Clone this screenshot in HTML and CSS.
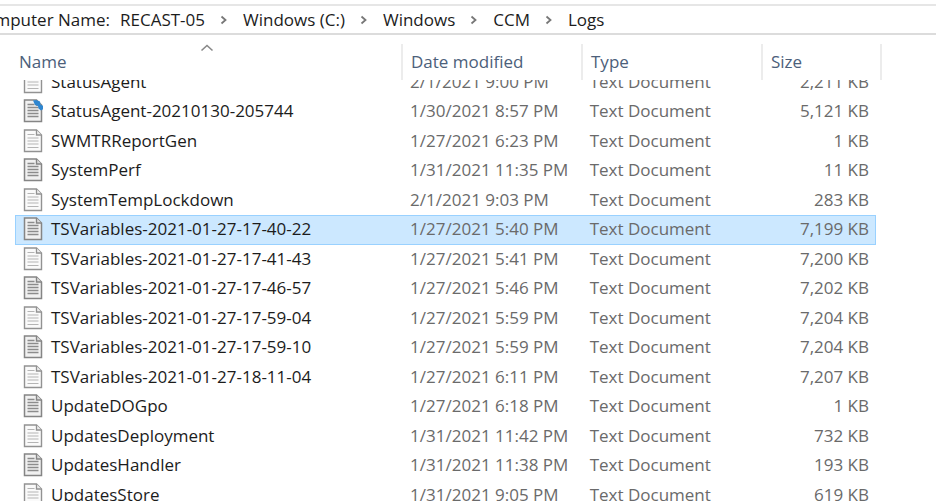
FILE: index.html
```html
<!DOCTYPE html>
<html lang="en">
<head>
<meta charset="utf-8">
<title>Logs</title>
<link rel="stylesheet" href="styles.css">
</head>
<body>
<svg class="sprite" aria-hidden="true">
  <symbol id="chevron" viewBox="0 0 8 10"><path d="M1.5 1.5 5.5 5 1.5 8.5" fill="none" stroke="#777" stroke-width="1.8"/></symbol>
  <symbol id="doc-light" viewBox="0 0 20 24">
    <path d="M1.5 1h12l5 5v16.500h-17z" fill="#fafafa" stroke="#929292" stroke-width="1.4"/>
    <path d="M13.500 1v5h5" fill="#eee" stroke="#929292" stroke-width="1.3"/>
    <path d="M4.500 5.500h7M4.500 9h11M4.500 12h11M4.500 15h11M4.500 18.500h11" stroke="#b4b4b4" stroke-width="1.2"/>
  </symbol>
  <symbol id="doc-dark" viewBox="0 0 20 24">
    <path d="M1.5 1h12l5 5v16.500h-17z" fill="#f1f1f1" stroke="#858585" stroke-width="1.5"/>
    <path d="M13.500 1v5h5" fill="#ddd" stroke="#858585" stroke-width="1.4"/>
    <path d="M4.500 5.500h7M4.500 8.500h11M4.500 11.500h11M4.500 14.500h11M4.500 17.500h11" stroke="#8c8c8c" stroke-width="1.4"/>
  </symbol>
</svg>

<nav class="address" aria-label="Location">
  <span class="computer">Computer Name:</span>
  <a href="#">RECAST-05</a><svg class="sep"><use href="#chevron"/></svg>
  <a href="#">Windows (C:)</a><svg class="sep"><use href="#chevron"/></svg>
  <a href="#">Windows</a><svg class="sep"><use href="#chevron"/></svg>
  <a href="#">CCM</a><svg class="sep"><use href="#chevron"/></svg>
  <a href="#">Logs</a>
</nav>

<main class="files">
<table>
  <thead>
    <tr>
      <th scope="col" aria-sort="ascending">Name<svg class="sort" viewBox="0 0 14 8"><path d="M1.500 6.500 7 1.500l5.500 5" fill="none" stroke="#888" stroke-width="1.600"/></svg></th>
      <th scope="col">Date modified</th><th scope="col">Type</th><th scope="col">Size</th>
    </tr>
  </thead>
  <tbody>
    <tr><td><svg class="icon"><use href="#doc-light"/></svg>StatusAgent</td><td>2/1/2021 9:00 PM</td><td>Text Document</td><td>2,211 KB</td></tr>
    <tr><td><svg class="icon" viewBox="0 0 20 24"><use href="#doc-dark" width="20" height="24"/><path d="M10 1.500l3-.5 4 1.500.5 3 3 1.500v3l-2.500 1.500-2.500-2-.5-2.500-3-1z" fill="#2f86d0"/></svg>StatusAgent-20210130-205744</td><td>1/30/2021 8:57 PM</td><td>Text Document</td><td>5,121 KB</td></tr>
    <tr><td><svg class="icon"><use href="#doc-light"/></svg>SWMTRReportGen</td><td>1/27/2021 6:23 PM</td><td>Text Document</td><td>1 KB</td></tr>
    <tr><td><svg class="icon"><use href="#doc-dark"/></svg>SystemPerf</td><td>1/31/2021 11:35 PM</td><td>Text Document</td><td>11 KB</td></tr>
    <tr><td><svg class="icon"><use href="#doc-light"/></svg>SystemTempLockdown</td><td>2/1/2021 9:03 PM</td><td>Text Document</td><td>283 KB</td></tr>
    <tr class="selected"><td><svg class="icon"><use href="#doc-dark"/></svg>TSVariables-2021-01-27-17-40-22</td><td>1/27/2021 5:40 PM</td><td>Text Document</td><td>7,199 KB</td></tr>
    <tr><td><svg class="icon"><use href="#doc-light"/></svg>TSVariables-2021-01-27-17-41-43</td><td>1/27/2021 5:41 PM</td><td>Text Document</td><td>7,200 KB</td></tr>
    <tr><td><svg class="icon"><use href="#doc-dark"/></svg>TSVariables-2021-01-27-17-46-57</td><td>1/27/2021 5:46 PM</td><td>Text Document</td><td>7,202 KB</td></tr>
    <tr><td><svg class="icon"><use href="#doc-light"/></svg>TSVariables-2021-01-27-17-59-04</td><td>1/27/2021 5:59 PM</td><td>Text Document</td><td>7,204 KB</td></tr>
    <tr><td><svg class="icon"><use href="#doc-dark"/></svg>TSVariables-2021-01-27-17-59-10</td><td>1/27/2021 5:59 PM</td><td>Text Document</td><td>7,204 KB</td></tr>
    <tr><td><svg class="icon"><use href="#doc-light"/></svg>TSVariables-2021-01-27-18-11-04</td><td>1/27/2021 6:11 PM</td><td>Text Document</td><td>7,207 KB</td></tr>
    <tr><td><svg class="icon"><use href="#doc-dark"/></svg>UpdateDOGpo</td><td>1/27/2021 6:18 PM</td><td>Text Document</td><td>1 KB</td></tr>
    <tr><td><svg class="icon"><use href="#doc-light"/></svg>UpdatesDeployment</td><td>1/31/2021 11:42 PM</td><td>Text Document</td><td>732 KB</td></tr>
    <tr><td><svg class="icon"><use href="#doc-dark"/></svg>UpdatesHandler</td><td>1/31/2021 11:38 PM</td><td>Text Document</td><td>193 KB</td></tr>
    <tr><td><svg class="icon"><use href="#doc-light"/></svg>UpdatesStore</td><td>1/31/2021 9:05 PM</td><td>Text Document</td><td>619 KB</td></tr>
  </tbody>
</table>
</main>
</body>
</html>
```
FILE: styles.css
```css
* { box-sizing: border-box; }
body {
  margin: 0;
  height: 100vh;
  overflow: hidden;
  display: flex;
  flex-direction: column;
  background: #fff;
  color: #1c1c1c;
  font: 17px/24px "Open Sans", "Noto Sans", sans-serif;
}
.sprite { display: none; }

.address {
  flex: none;
  display: flex;
  align-items: center;
  height: 31px;
  margin-top: 4px;
  border-top: 2px solid #e6e6e6;
  border-bottom: 2px solid #dcdcdc;
  white-space: nowrap;
  overflow: hidden;
}
.address a { color: inherit; text-decoration: none; }
.computer {
  display: flex;
  justify-content: flex-end;
  width: 110px;
  margin-right: 10px;
}
.sep { width: 8px; height: 10px; margin: 0 15px; }

.files { flex: 1; min-height: 0; overflow: hidden; padding: 0 60px 0 15px; }
table, thead, tbody { display: block; }
tr { display: grid; grid-template-columns: 386fr 180fr 180fr 115fr; }
thead { position: relative; z-index: 1; background: #fff; padding-top: 9px; }
th {
  position: relative;
  height: 36px;
  padding: 6px 0 0 8px;
  border-left: 2px solid #ececec;
  color: #4c607a;
  font-weight: 400;
  text-align: left;
}
th:first-child { border-left: 0; padding-left: 4px; }
th:last-child { margin-right: -6px; border-right: 2px solid #ececec; }
.sort { position: absolute; top: 0; left: 48%; width: 14px; height: 8px; }

tbody { margin-top: -12px; }
tbody tr { height: 29px; border: 1px solid transparent; }
tbody tr:nth-child(even) { height: 30px; }
tbody tr.selected { background: #cce8ff; border-color: #99d1ff; }
td {
  display: flex;
  align-items: center;
  padding: 0 6px 2px 9px;
  color: #6a6a6a;
  white-space: nowrap;
}
td:first-child { padding-left: 7px; color: #1c1c1c; }
td:last-child { justify-content: flex-end; }
.icon { flex: none; width: 20px; height: 24px; margin-right: 8px; }
```
